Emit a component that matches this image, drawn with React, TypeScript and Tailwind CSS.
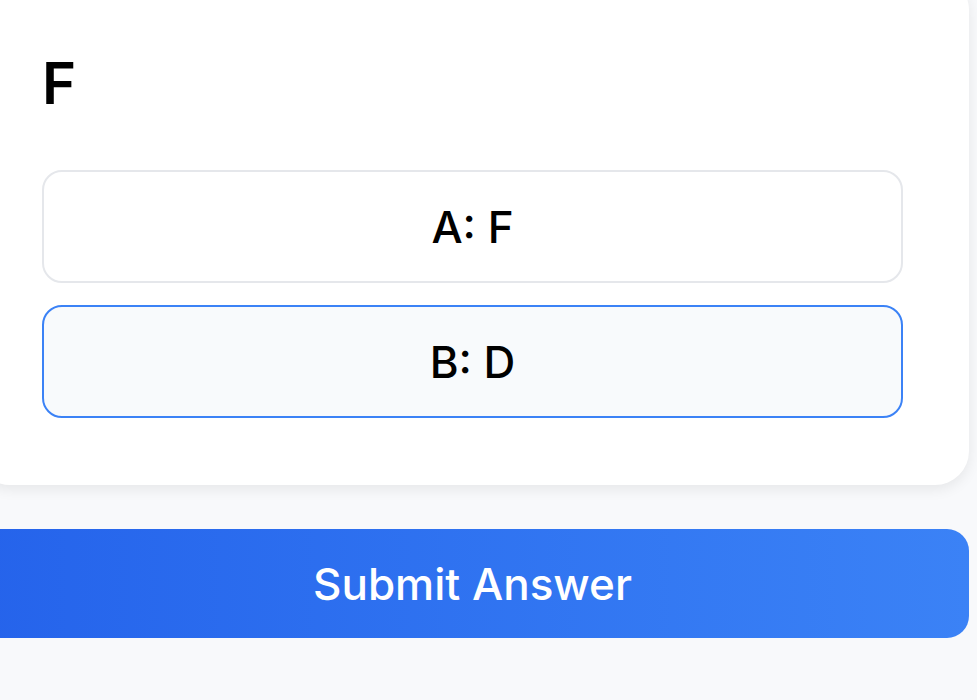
import React from "react";

const options = [
  { id: "A", label: "F", selected: false },
  { id: "B", label: "D", selected: true },
];

const App = () => {
  return (
    <div className="min-h-screen w-full overflow-hidden bg-[#f8f9fb] font-['Inter',sans-serif] text-black">
      <div className="-ml-[24px] -mt-[24px] flex w-[993px] flex-col gap-[44px]">
        <div className="rounded-[34px] bg-white px-[66px] pb-[67px] pt-[78px] shadow-[0_4px_14px_rgba(0,0,0,0.08)]">
          <h2 className="text-[58px] font-semibold leading-[58px]">F</h2>
          <div className="mt-[58px] flex flex-col gap-[22px]">
            {options.map((o) => (
              <button
                key={o.id}
                className={
                  o.selected
                    ? "flex h-[113px] items-center justify-center rounded-[20px] border-2 border-[#3b82f6] bg-[#f8fafc] text-[44px] font-medium"
                    : "flex h-[113px] items-center justify-center rounded-[20px] border-2 border-[#e5e7eb] bg-white text-[44px] font-medium"
                }
              >
                {o.id}: {o.label}
              </button>
            ))}
          </div>
        </div>
        <button className="flex h-[109px] items-center justify-center rounded-[22px] bg-gradient-to-r from-[#2563eb] to-[#3b82f6] text-[44px] font-medium text-white">
          Submit Answer
        </button>
      </div>
    </div>
  );
};

export default App;
